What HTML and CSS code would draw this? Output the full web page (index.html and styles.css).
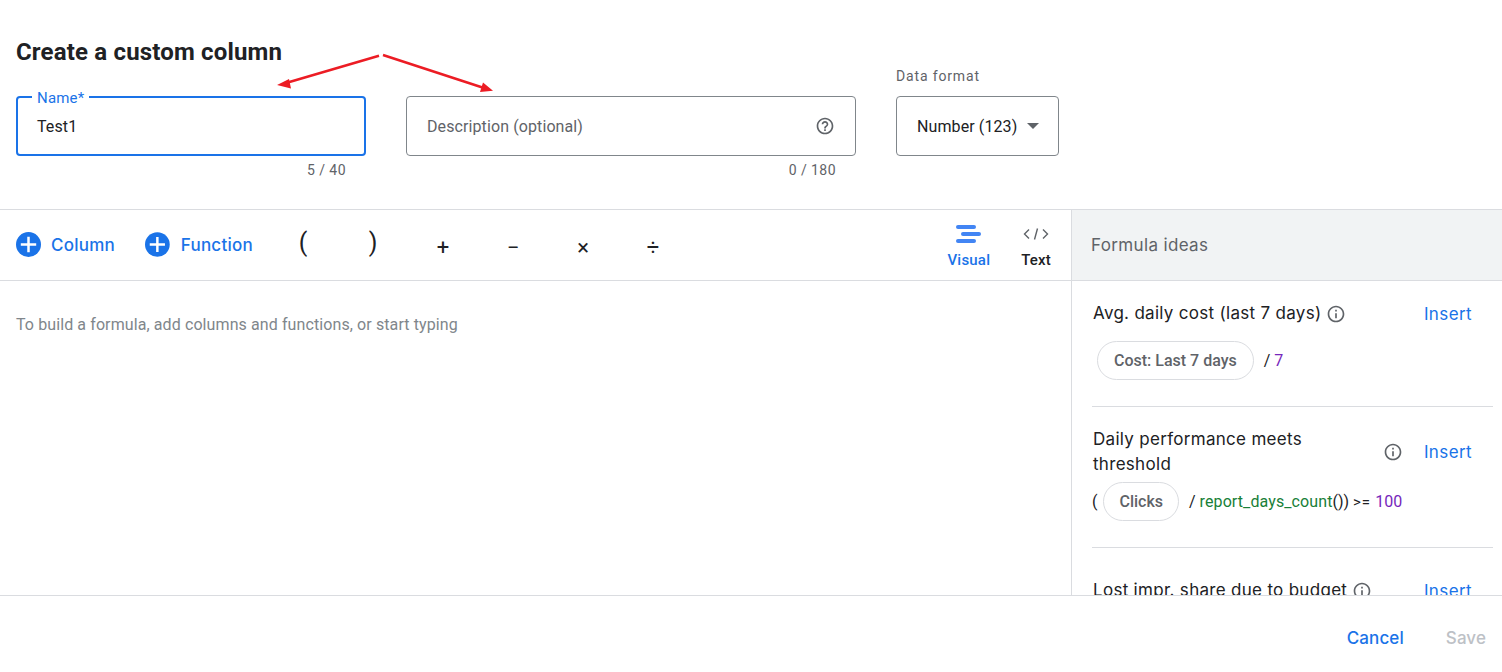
FILE: index.html
```html
<!DOCTYPE html>
<html lang="en">
<head>
<meta charset="utf-8">
<title>Create a custom column</title>
<link rel="stylesheet" href="styles.css">
</head>
<body>
<div class="page">
  <header class="head">
    <h1 class="title">Create a custom column</h1>
    <div class="fields">
      <div class="field field-name">
        <div class="box box-focus">
          <span class="float-label">Name*</span>
          <span class="value">Test1</span>
        </div>
        <div class="count">5 / 40</div>
      </div>
      <div class="field field-desc">
        <div class="box">
          <span class="placeholder">Description (optional)</span>
          <svg class="help" width="20" height="20" viewBox="0 0 24 24" fill="#5f6368"><path d="M11 18h2v-2h-2v2zm1-16C6.48 2 2 6.48 2 12s4.48 10 10 10 10-4.48 10-10S17.52 2 12 2zm0 18c-4.41 0-8-3.59-8-8s3.59-8 8-8 8 3.59 8 8-3.59 8-8 8zm0-14c-2.21 0-4 1.79-4 4h2c0-1.1.9-2 2-2s2 .9 2 2c0 2-3 1.75-3 5h2c0-2.25 3-2.5 3-5 0-2.21-1.79-4-4-4z"/></svg>
        </div>
        <div class="count">0 / 180</div>
      </div>
      <div class="field field-format">
        <div class="format-label">Data format</div>
        <div class="box box-select">
          <span class="value">Number (123)</span>
          <span class="caret"></span>
        </div>
      </div>
    </div>
  </header>
  <div class="workspace">
    <section class="editor">
      <div class="toolbar">
        <button class="add add-col">
          <svg width="25" height="25" viewBox="0 0 26 26"><circle cx="13" cy="13" r="13" fill="#1a73e8"/><path d="M13 5v16M5 13h16" stroke="#fff" stroke-width="2.6"/></svg>
          <span>Column</span>
        </button>
        <button class="add add-fn">
          <svg width="25" height="25" viewBox="0 0 26 26"><circle cx="13" cy="13" r="13" fill="#1a73e8"/><path d="M13 5v16M5 13h16" stroke="#fff" stroke-width="2.6"/></svg>
          <span>Function</span>
        </button>
        <div class="ops">
          <span class="op paren">(</span>
          <span class="op paren">)</span>
          <span class="op">+</span>
          <span class="op">−</span>
          <span class="op">×</span>
          <span class="op">÷</span>
        </div>
        <div class="modes">
          <div class="mode mode-on">
            <svg width="25" height="18" viewBox="0 0 25 18" fill="#4285f4"><rect x="0" y="0" width="20" height="4" rx="2"/><rect x="5" y="7" width="20" height="4" rx="2"/><rect x="0" y="14" width="20" height="4" rx="2"/></svg>
            <span>Visual</span>
          </div>
          <div class="mode">
            <svg width="26" height="18" viewBox="0 0 26 18" fill="none" stroke="#5f6368" stroke-width="1.4"><path d="M6 4.500 1.500 9 6 13.500M20 4.500 24.500 9 20 13.500M14.500 3.500 11.500 14.500"/></svg>
            <span>Text</span>
          </div>
        </div>
      </div>
      <p class="hint">To build a formula, add columns and functions, or start typing</p>
    </section>
    <aside class="ideas">
      <div class="ideas-head">Formula ideas</div>
      <div class="ideas-list">
        <article class="idea idea-1">
          <div class="idea-top">
            <div class="idea-name">Avg. daily cost (last 7 days)
              <svg class="info" width="20" height="20" viewBox="0 0 24 24" fill="#5f6368"><path d="M11 7h2v2h-2zm0 4h2v6h-2zm1-9C6.480 2 2 6.480 2 12s4.480 10 10 10 10-4.480 10-10S17.520 2 12 2zm0 18c-4.410 0-8-3.590-8-8s3.590-8 8-8 8 3.590 8 8-3.590 8-8 8z"/></svg>
            </div>
            <a class="insert">Insert</a>
          </div>
          <div class="formula formula-indent"><span class="chip">Cost: Last 7 days</span><span class="sym">/ </span><span class="num">7</span></div>
        </article>
        <article class="idea idea-2">
          <div class="idea-top">
            <div class="idea-name idea-wrap">Daily performance meets threshold</div>
            <svg class="info info-side" width="20" height="20" viewBox="0 0 24 24" fill="#5f6368"><path d="M11 7h2v2h-2zm0 4h2v6h-2zm1-9C6.480 2 2 6.480 2 12s4.480 10 10 10 10-4.480 10-10S17.520 2 12 2zm0 18c-4.410 0-8-3.590-8-8s3.590-8 8-8 8 3.590 8 8-3.590 8-8 8z"/></svg>
            <a class="insert">Insert</a>
          </div>
          <div class="formula formula-tight"><span class="sym">(</span><span class="chip chip-small">Clicks</span><span class="sym">/ </span><span class="fn">report_days_count</span><span class="sym">()) </span><span class="sym sym-small">&gt;= </span><span class="num">100</span></div>
        </article>
        <article class="idea idea-3">
          <div class="idea-top">
            <div class="idea-name">Lost impr. share due to budget
              <svg class="info" width="20" height="20" viewBox="0 0 24 24" fill="#5f6368"><path d="M11 7h2v2h-2zm0 4h2v6h-2zm1-9C6.480 2 2 6.480 2 12s4.480 10 10 10 10-4.480 10-10S17.520 2 12 2zm0 18c-4.410 0-8-3.590-8-8s3.590-8 8-8 8 3.590 8 8-3.590 8-8 8z"/></svg>
            </div>
            <a class="insert">Insert</a>
          </div>
        </article>
      </div>
    </aside>
  </div>
  <footer class="foot">
    <a class="foot-btn cancel">Cancel</a>
    <a class="foot-btn save">Save</a>
  </footer>
  <svg class="arrows" width="520" height="70" viewBox="0 0 520 70">
    <path d="M379 25.700 286 53M383 25 484 58" stroke="#ec1c24" stroke-width="2.500" fill="none"/>
    <path d="M277 55 289 49 291 58.500zM493 60.700 483 52.500 480 62z" fill="#ec1c24"/>
  </svg>
</div>
</body>
</html>
```
FILE: styles.css
```css
* { box-sizing: border-box; }
html, body { margin: 0; height: 100%; background: #fff; }
body { font-family: Roboto, "Liberation Sans", sans-serif; color: #202124; overflow: hidden; }
.page { position: relative; width: 1502px; height: 672px; display: flex; flex-direction: column; }

.head { height: 210px; flex: none; border-bottom: 1px solid #dadce0; padding: 38px 16px 0; }
.title { margin: 0; font-size: 24px; line-height: 28px; font-weight: 700; letter-spacing: .17px; color: #202124; }
.fields { display: flex; gap: 40px; margin-top: 2px; }
.field { display: flex; flex-direction: column; }
.field-name { width: 350px; padding-top: 28px; }
.field-desc { width: 450px; padding-top: 28px; }
.field-format { width: 163px; }
.format-label { height: 28px; margin-top: -2px; margin-bottom: 2px; font-size: 14px; line-height: 20px; letter-spacing: .85px; color: #5f6368; }
.box { position: relative; height: 60px; border: 1px solid #80868b; border-radius: 4px; padding: 0 20px; display: flex; align-items: center; justify-content: space-between; font-size: 16px; letter-spacing: .1px; }
.box-focus { border: 2px solid #1a73e8; padding: 0 19px; }
.float-label { position: absolute; left: 14px; top: -9px; padding: 0 5px; background: #fff; font-size: 15px; line-height: 18px; letter-spacing: .2px; color: #1a73e8; }
.value { color: #202124; }
.placeholder { color: #5f6368; }
.count { font-size: 14px; line-height: 20px; color: #5f6368; text-align: right; padding: 4px 20px 0 0; letter-spacing: .45px; }
.caret { width: 0; height: 0; border-left: 6px solid transparent; border-right: 6px solid transparent; border-top: 6px solid #5f6368; margin-left: 4px; }
.box-select { padding: 0 19px 0 20px; }
.help { flex: none; }

.workspace { flex: none; height: 385px; display: flex; overflow: hidden; }
.editor { width: 1071px; flex: none; }
.toolbar { height: 71px; border-bottom: 1px solid #dadce0; display: flex; align-items: center; padding-left: 16px; }
.add { display: flex; align-items: center; gap: 10px; border: 0; background: none; padding: 0; color: #1a73e8; font-family: Inter, sans-serif; font-size: 17px; line-height: 24px; letter-spacing: .25px; cursor: pointer; margin-top: -1px; }
.add-col { width: 129px; }
.add-fn { width: 108px; }
.add-fn span { margin-left: 1px; }
.add span { font-weight: 500; }
.ops { display: flex; margin-left: 15px; width: 420px; padding-top: 6px; }
.op { width: 70px; text-align: center; font-size: 22px; line-height: 28px; color: #202124; }
.paren { font-size: 25px; font-weight: 400; margin-top: -5px; }
.modes { display: flex; gap: 31px; margin-left: auto; padding-right: 20px; padding-top: 4px; }
.mode { display: flex; flex-direction: column; align-items: center; gap: 8px; font-size: 15px; line-height: 18px; font-weight: 500; letter-spacing: .2px; color: #202124; }
.mode-on { color: #1a73e8; }
.hint { margin: 34px 0 0 16px; font-size: 16px; line-height: 20px; color: #80868b; letter-spacing: .1px; }

.ideas { width: 431px; flex: none; border-left: 1px solid #dadce0; display: flex; flex-direction: column; overflow: hidden; }
.ideas-head { height: 71px; flex: none; background: #f1f3f4; border-bottom: 1px solid #dadce0; display: flex; align-items: center; padding-left: 19px; font-family: Inter, sans-serif; font-size: 17px; letter-spacing: .35px; color: #5f6368; }
.ideas-list { padding: 0 9px 0 20px; }
.idea { border-bottom: 1px solid #dadce0; }
.idea-1 { height: 126px; padding-top: 20px; }
.idea-2 { height: 141px; padding-top: 20px; }
.idea-3 { border-bottom: 0; padding-top: 30px; }
.idea-top { display: flex; align-items: center; }
.idea-name { font-family: Inter, sans-serif; font-size: 17px; line-height: 25px; letter-spacing: .3px; color: #202124; display: flex; align-items: center; gap: 5px; margin-left: 1px; }
.idea-wrap { width: 240px; }
.info { flex: none; }
.info-side { margin-left: 50px; }
.insert { margin-left: auto; margin-right: 21px; color: #1a73e8; font-family: Inter, sans-serif; font-size: 17px; line-height: 24px; letter-spacing: .4px; }
.formula { display: flex; align-items: center; font-size: 16px; line-height: 20px; white-space: pre; margin-top: 6px; color: #202124; }
.formula-indent { padding-left: 5px; margin-top: 15px; }
.formula-tight { margin-top: 5px; }
.chip { display: inline-flex; align-items: center; height: 39px; border: 1px solid #dadce0; border-radius: 20px; padding: 0 16px; font-weight: 500; color: #5f6368; margin-right: 10px; }
.chip-small { margin-left: 6px; padding: 0 15px; }
.num { color: #7627bb; }
.fn { color: #188038; letter-spacing: .1px; }
.sym { color: #202124; }
.sym-small { font-size: 15px; letter-spacing: .8px; }

.foot { position: relative; z-index: 1; flex: 1; background: #fff; border-top: 1px solid #dadce0; display: flex; align-items: center; justify-content: flex-end; padding: 7px 16px 0 0; gap: 42px; font-family: Inter, sans-serif; font-size: 17px; letter-spacing: .1px; font-weight: 500; }
.cancel { color: #1a73e8; }
.save { color: #bdc1c6; }
.arrows { position: absolute; left: 0; top: 30px; pointer-events: none; }
```
